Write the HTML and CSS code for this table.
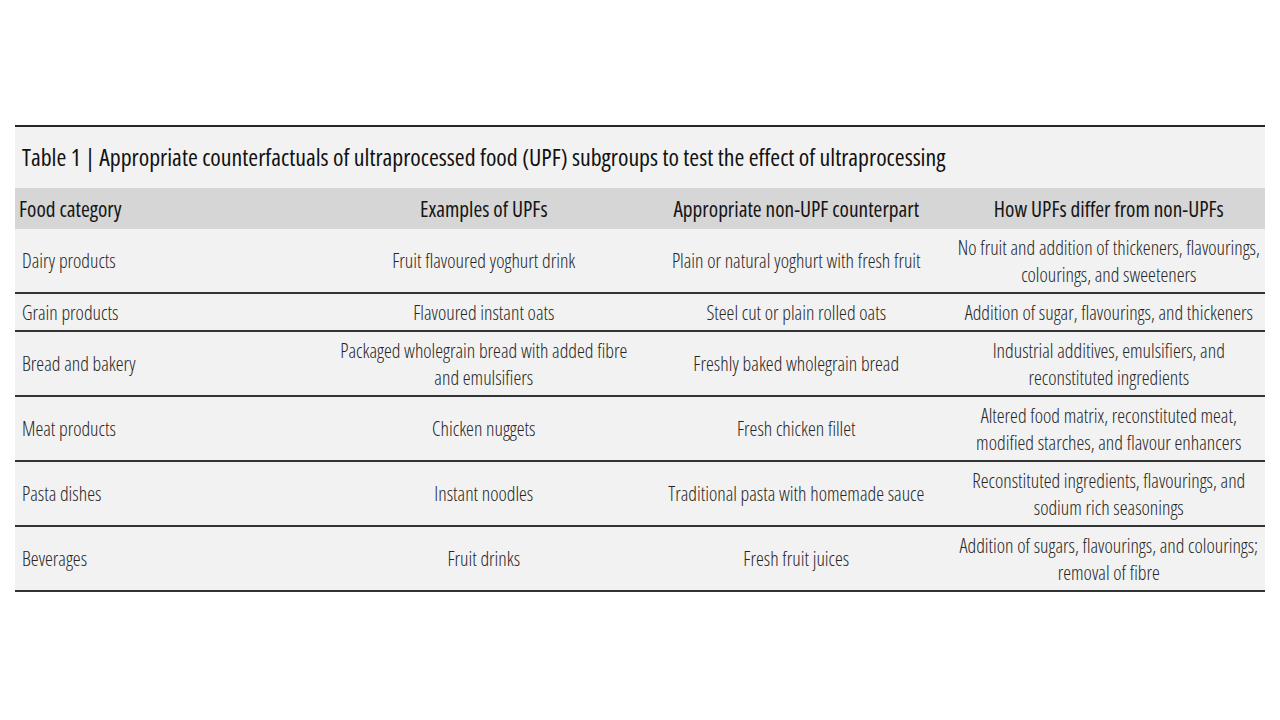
FILE: index.html
```html
<!DOCTYPE html>
<html lang="en">
<head>
<meta charset="utf-8">
<title>Table 1</title>
<link rel="stylesheet" href="styles.css">
</head>
<body>
<div class="sheet">
  <div class="title">Table 1 | Appropriate counterfactuals of ultraprocessed food (UPF) subgroups to test the effect of ultraprocessing</div>
  <table class="tbl">
    <thead>
      <tr>
        <th class="first">Food category</th>
        <th>Examples of UPFs</th>
        <th>Appropriate non-UPF counterpart</th>
        <th>How UPFs differ from non-UPFs</th>
      </tr>
    </thead>
    <tbody>
      <tr>
        <td class="first">Dairy products</td>
        <td>Fruit flavoured yoghurt drink</td>
        <td>Plain or natural yoghurt with fresh fruit</td>
        <td>No fruit and addition of thickeners, flavourings,<br>colourings, and sweeteners</td>
      </tr>
      <tr>
        <td class="first">Grain products</td>
        <td>Flavoured instant oats</td>
        <td>Steel cut or plain rolled oats</td>
        <td>Addition of sugar, flavourings, and thickeners</td>
      </tr>
      <tr>
        <td class="first">Bread and bakery</td>
        <td>Packaged wholegrain bread with added fibre<br>and emulsifiers</td>
        <td>Freshly baked wholegrain bread</td>
        <td>Industrial additives, emulsifiers, and<br>reconstituted ingredients</td>
      </tr>
      <tr>
        <td class="first">Meat products</td>
        <td>Chicken nuggets</td>
        <td>Fresh chicken fillet</td>
        <td>Altered food matrix, reconstituted meat,<br>modified starches, and flavour enhancers</td>
      </tr>
      <tr>
        <td class="first">Pasta dishes</td>
        <td>Instant noodles</td>
        <td>Traditional pasta with homemade sauce</td>
        <td>Reconstituted ingredients, flavourings, and<br>sodium rich seasonings</td>
      </tr>
      <tr>
        <td class="first">Beverages</td>
        <td>Fruit drinks</td>
        <td>Fresh fruit juices</td>
        <td>Addition of sugars, flavourings, and colourings;<br>removal of fibre</td>
      </tr>
    </tbody>
  </table>
</div>
</body>
</html>
```
FILE: styles.css
```css
html, body {
  margin: 0;
  padding: 0;
  background: #ffffff;
}
body {
  font-family: "Open Sans", "Noto Sans", "DejaVu Sans Condensed", sans-serif;
  font-stretch: 75%;
  color: #2a2a2a;
}
.sheet {
  margin: 125px 0 0 15px;
  width: 1250px;
  border-top: 2px solid #262626;
  background: #f2f2f2;
}
.title {
  height: 61px;
  box-sizing: border-box;
  padding: 15px 7px 0;
  font-size: 23.8px;
  line-height: 30px;
  font-weight: 400;
  color: #111;
  white-space: nowrap;
}
.tbl {
  width: 100%;
  border-collapse: collapse;
  table-layout: fixed;
}
.tbl th {
  background: #d6d6d6;
  height: 41px;
  padding: 0 4px;
  font-weight: 500;
  font-size: 21.3px;
  color: #151515;
  text-align: center;
  white-space: nowrap;
}
.tbl td {
  padding: 4.5px 2px;
  font-size: 19.8px;
  line-height: 27px;
  font-weight: 300;
  text-align: center;
  border-bottom: 2px solid #333;
  color: #262626;
  white-space: nowrap;
}
.tbl th.first {
  text-align: left;
  padding-left: 4px;
}
.tbl td.first {
  text-align: left;
  padding-left: 7px;
}
```
